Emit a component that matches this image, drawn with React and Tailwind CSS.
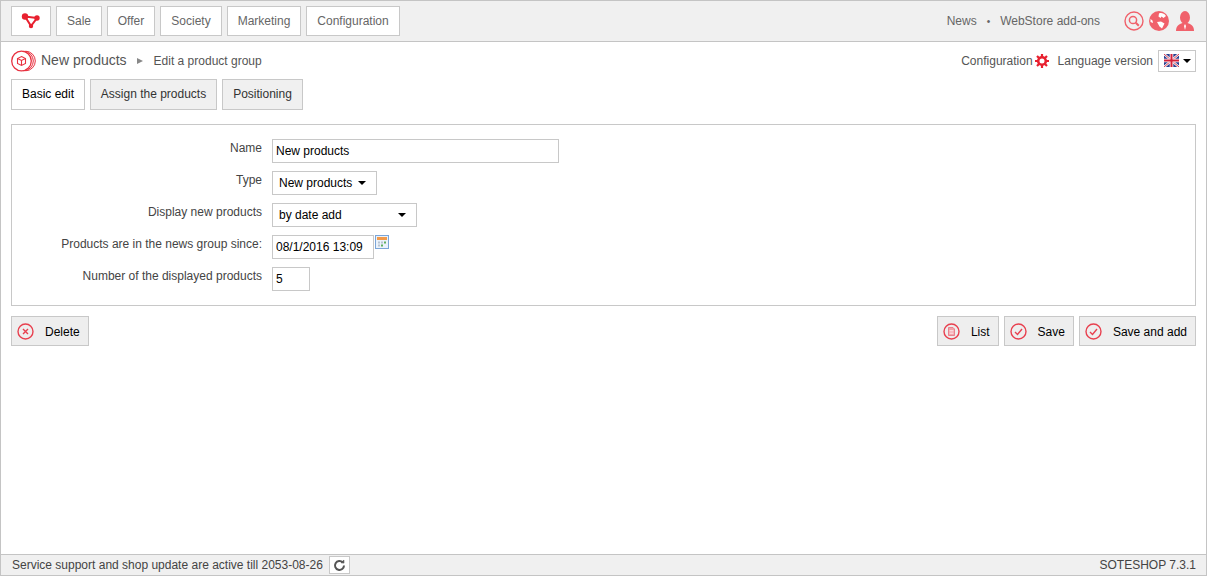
const navItems = [
  { label: "Sale", width: "w-[46px]" },
  { label: "Offer", width: "w-[48px]" },
  { label: "Society", width: "w-[62px]" },
  { label: "Marketing", width: "w-[74px]" },
  { label: "Configuration", width: "w-[94px]" },
];

function Caret({ className = "" }) {
  return <span className={`inline-block w-0 h-0 border-x-[4px] border-x-transparent border-t-[4px] border-t-black ${className}`} />;
}

function Ring({ children }) {
  return (
    <svg width="17" height="17" viewBox="0 0 17 17" fill="none" stroke="#e8404f" className="shrink-0">
      <circle cx="8.500" cy="8.500" r="7.500" strokeWidth="1.400" />
      {children}
    </svg>
  );
}

const CrossIcon = () => (
  <Ring>
    <path d="M6 6l5 5M11 6l-5 5" strokeWidth="1.400" />
  </Ring>
);

const CheckIcon = () => (
  <Ring>
    <path d="M5 9l2.500 2.500 4.500-5.500" strokeWidth="1.400" />
  </Ring>
);

const ListIcon = () => (
  <Ring>
    <path d="M5.500 4.500h4.500l1.500 1.500v6.500h-6z" fill="#f4a0a8" stroke="#e8707c" strokeWidth="0.800" />
    <path d="M6.500 7.500h4M6.500 9h4M6.500 10.600h4" stroke="#fff" strokeWidth="0.600" />
  </Ring>
);

function ActionButton({ icon, label }) {
  return (
    <button className="h-[30px] flex items-center gap-[11px] pl-[5px] pr-[8px] border border-[#c8c8c8] bg-[#eeeeee] text-[12px] text-black">
      {icon}
      <span className="pt-[1px]">{label}</span>
    </button>
  );
}

function Row({ label, children }) {
  return (
    <div className="flex h-[32px]">
      <div className="w-[250px] text-right text-[12px] text-[#444] pt-[2px] leading-[14px]">{label}</div>
      <div className="ml-[10px] flex items-start">{children}</div>
    </div>
  );
}

function UkFlag() {
  return (
    <svg width="15" height="13" viewBox="0 0 15 13">
      <rect width="15" height="13" rx="1.500" fill="#2a3f8f" />
      <path d="M0 0l15 13M15 0L0 13" stroke="#fff" strokeWidth="2.400" />
      <path d="M0 0l15 13M15 0L0 13" stroke="#d3213a" strokeWidth="0.900" />
      <path d="M7.500 0v13M0 6.500h15" stroke="#fff" strokeWidth="3.600" />
      <path d="M7.500 0v13M0 6.500h15" stroke="#d3213a" strokeWidth="2" />
    </svg>
  );
}

export default function App() {
  return (
    <div className="h-[576px] flex flex-col border border-[#c4c4c4] bg-white font-['Liberation_Sans',Arial,sans-serif] text-[12px] overflow-hidden">
      <header className="h-[41px] shrink-0 flex items-center justify-between bg-[#f0f0f0] border-b border-[#c4c4c4] pl-[10px] pr-[11px]">
        <nav className="flex gap-[5px] pb-[1px]">
          <div className="w-[40px] h-[30px] flex items-center justify-center bg-white border border-[#c8c8c8]">
            <svg width="20" height="16" viewBox="0 0 20 16" fill="none">
              <path d="M4 3.500l12 1.500-6 8z" stroke="#e8202f" strokeWidth="2" />
              <circle cx="4" cy="3.500" r="3.200" fill="#e8202f" />
              <circle cx="16" cy="5" r="2.700" fill="#e8202f" />
              <circle cx="10" cy="13" r="2.200" fill="#e8202f" />
            </svg>
          </div>
          {navItems.map((item) => (
            <div key={item.label} className={`${item.width} h-[30px] flex items-center justify-center bg-white border border-[#c8c8c8] text-[#666]`}>
              {item.label}
            </div>
          ))}
        </nav>
        <div className="flex items-center text-[#666]">
          <span>News</span>
          <span className="mx-[10px] text-[10px]">•</span>
          <span>WebStore add-ons</span>
          <div className="flex items-center ml-[24px]">
            <svg width="20" height="20" viewBox="0 0 20 20" fill="none" stroke="#f0616b">
              <circle cx="10" cy="10" r="9" strokeWidth="1.400" />
              <circle cx="9" cy="9" r="3.600" strokeWidth="1.500" />
              <path d="M11.800 11.800l3 3" strokeWidth="2" />
            </svg>
            <svg width="20" height="20" viewBox="0 0 20 20" className="ml-[5px]">
              <circle cx="10" cy="10" r="10" fill="#f0616b" />
              <path d="M10 2.500c2-1 5-.5 7 2.500l-2.500 2-2-1.500-1 1.500-2-1.500zM8 11l4-.5 3.500 2-2.500 5-2.500-2zM1.500 8l2 1.500.5 2.500-2.500-1z" fill="#fff" />
            </svg>
            <svg width="20" height="20" viewBox="0 0 20 20" className="ml-[6px]">
              <ellipse cx="10" cy="6.500" rx="5" ry="6.500" fill="#f0616b" />
              <path d="M1 20c0-5 3-7 6.500-8h5c3.500 1 6.500 3 6.500 8z" fill="#f0616b" />
              <path d="M10 13l-1 2 1 4 1-4z" fill="#fff" />
            </svg>
          </div>
        </div>
      </header>

      <main className="flex-1 pl-[10px] pr-[10px]">
        <div className="h-[37px] flex items-center justify-between">
          <div className="flex items-center">
            <svg width="25" height="22" viewBox="0 0 25 22" fill="none" stroke="#e8303f">
              <circle cx="10.500" cy="11" r="9.800" strokeWidth="1.300" />
              <path d="M12.500 1.200a9.800 9.800 0 0 1 0 19.600" strokeWidth="1" />
              <path d="M14.500 1.200a9.800 9.800 0 0 1 0 19.600" strokeWidth="1" />
              <path d="M10.500 6.500l4 2v5l-4 2-4-2v-5zM6.500 8.500l4 2 4-2M10.500 10.500v5" strokeWidth="1.100" />
            </svg>
            <span className="ml-[5px] text-[14px] text-[#555]">New products</span>
            <span className="ml-[10px] w-0 h-0 border-y-[3.500px] border-y-transparent border-l-[6px] border-l-[#888]" />
            <span className="ml-[11px] text-[#555]">Edit a product group</span>
          </div>
          <div className="flex items-center text-[#555]">
            <span>Configuration</span>
            <svg width="14" height="14" viewBox="0 0 14 14" className="ml-[2px]">
              <circle cx="7" cy="7" r="3.800" fill="none" stroke="#e8202f" strokeWidth="2.600" />
              <path d="M7 0v3M7 11v3M0 7h3M11 7h3M2 2l2 2M10 10l2 2M12 2l-2 2M4 10l-2 2" stroke="#e8202f" strokeWidth="2.200" />
            </svg>
            <span className="ml-[9px]">Language version</span>
            <div className="ml-[5px] w-[38px] h-[22px] flex items-center justify-center gap-[4px] bg-white border border-[#c8c8c8]">
              <UkFlag />
              <Caret />
            </div>
          </div>
        </div>

        <div className="flex gap-[5px]">
          <div className="w-[74px] h-[31px] pb-[1px] flex items-center justify-center bg-white border border-[#c8c8c8] text-black">Basic edit</div>
          <div className="w-[127px] h-[31px] pb-[1px] flex items-center justify-center bg-[#f0f0f0] border border-[#c8c8c8] text-[#333]">Assign the products</div>
          <div className="w-[81px] h-[31px] pb-[1px] flex items-center justify-center bg-[#f0f0f0] border border-[#c8c8c8] text-[#333]">Positioning</div>
        </div>

        <section className="mt-[14px] h-[182px] border border-[#c8c8c8] pt-[14px]">
          <Row label="Name">
            <input readOnly value="New products" className="w-[287px] h-[24px] px-[3px] border border-[#c8c8c8] text-[12px] text-black outline-none" />
          </Row>
          <Row label="Type">
            <div className="w-[105px] h-[24px] pl-[6px] flex items-center border border-[#c8c8c8] text-black">
              New products
              <Caret className="ml-[6px]" />
            </div>
          </Row>
          <Row label="Display new products">
            <div className="w-[145px] h-[24px] pl-[6px] pr-[10px] flex items-center justify-between border border-[#c8c8c8] text-black">
              by date add
              <Caret />
            </div>
          </Row>
          <Row label="Products are in the news group since:">
            <input readOnly value="08/1/2016 13:09" className="w-[102px] h-[24px] px-[3px] border border-[#c8c8c8] text-[12px] text-black outline-none" />
            <svg width="14" height="14" viewBox="0 0 14 14" className="ml-[1px]">
              <rect x="0.500" y="0.500" width="13" height="13" fill="#eaf2fb" stroke="#7aa5d8" />
              <rect x="2" y="2" width="10" height="3" fill="#f29a4a" />
              <path d="M3 6.500h2v2H3zM6 6.500h2v2H6zM3 9.500h2v2H3z" fill="#b8c4d2" />
              <path d="M9 6.500h2v2H9zM6 9.500h2v2H6z" fill="#5fae5f" />
            </svg>
          </Row>
          <Row label="Number of the displayed products">
            <input readOnly value="5" className="w-[38px] h-[24px] px-[3px] border border-[#c8c8c8] text-[12px] text-black outline-none" />
          </Row>
        </section>

        <div className="mt-[10px] flex justify-between">
          <ActionButton icon={<CrossIcon />} label="Delete" />
          <div className="flex gap-[5px]">
            <ActionButton icon={<ListIcon />} label="List" />
            <ActionButton icon={<CheckIcon />} label="Save" />
            <ActionButton icon={<CheckIcon />} label="Save and add" />
          </div>
        </div>
      </main>

      <footer className="h-[21px] shrink-0 flex items-center justify-between bg-[#f0f0f0] border-t border-[#c4c4c4] pl-[11px] pr-[10px] text-[#444]">
        <div className="flex items-center">
          <span>Service support and shop update are active till 2053-08-26</span>
          <div className="ml-[6px] w-[21px] h-[18px] flex items-center justify-center bg-white border border-[#c8c8c8]">
            <svg width="13" height="13" viewBox="0 0 13 13" fill="none" stroke="#555" strokeWidth="2">
              <path d="M11 6.500a4.500 4.500 0 1 1-1.300-3.200" />
              <path d="M8 3.800l3 .3-.1-3z" strokeWidth="0.600" fill="#555" />
            </svg>
          </div>
        </div>
        <span>SOTESHOP 7.3.1</span>
      </footer>
    </div>
  );
}
